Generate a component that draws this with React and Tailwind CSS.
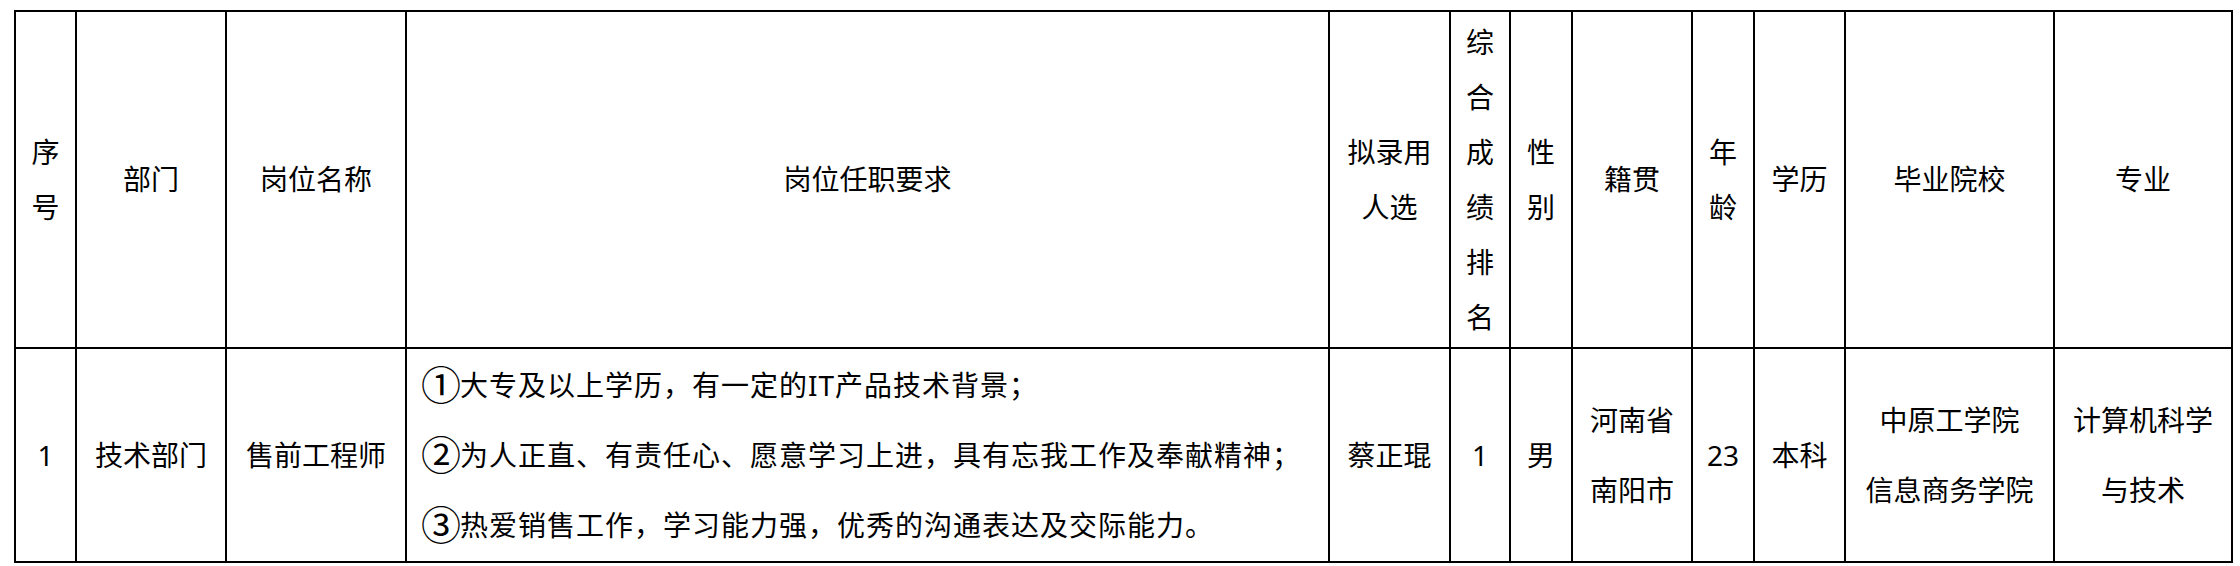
import React from 'react';

// Largeurs des colonnes (px), mesurées sur le tableau
const COLS = [61, 150, 180, 923, 121, 60, 62, 120, 62, 91, 209, 178];

const HEADERS = [
  ['序', '号'],
  ['部门'],
  ['岗位名称'],
  ['岗位任职要求'],
  ['拟录用', '人选'],
  ['综', '合', '成', '绩', '排', '名'],
  ['性', '别'],
  ['籍贯'],
  ['年', '龄'],
  ['学历'],
  ['毕业院校'],
  ['专业'],
];

const REQUIREMENTS = [
  ['①', '大专及以上学历，有一定的IT产品技术背景；'],
  ['②', '为人正直、有责任心、愿意学习上进，具有忘我工作及奉献精神；'],
  ['③', '热爱销售工作，学习能力强，优秀的沟通表达及交际能力。'],
];

const ROW = [
  ['1'],
  ['技术部门'],
  ['售前工程师'],
  null,
  ['蔡正琨'],
  ['1'],
  ['男'],
  ['河南省', '南阳市'],
  ['23'],
  ['本科'],
  ['中原工学院', '信息商务学院'],
  ['计算机科学', '与技术'],
];

export default function App() {
  return (
    <div
      className="w-[2240px] h-[566px] bg-white pt-[10px] pl-[14px] text-black"
      style={{ fontFamily: '"Noto Sans", "Noto Sans CJK SC", sans-serif' }}
    >
      <table className="table-fixed border-collapse border-2 border-black w-[2219px]">
        <colgroup>
          {COLS.map((w, i) => (
            <col key={i} style={{ width: w }} />
          ))}
        </colgroup>
        <tbody>
          <tr className="h-[337px]">
            {HEADERS.map((lines, i) => (
              <td key={i} className="border-2 border-black p-0 text-center align-middle text-[28px] leading-[55px]">
                {lines.map((l, j) => (
                  <div key={j} className="whitespace-nowrap">{l}</div>
                ))}
              </td>
            ))}
          </tr>
          <tr className="h-[214px]">
            {ROW.map((lines, i) =>
              lines ? (
                <td key={i} className="border-2 border-black p-0 text-center align-middle text-[28px] leading-[70px]">
                  {lines.map((l, j) => (
                    <div key={j} className="whitespace-nowrap">{l}</div>
                  ))}
                </td>
              ) : (
                <td key={i} className="border-2 border-black pl-[14px] pr-0 py-0 text-left align-middle text-[28px] leading-[70px]">
                  {REQUIREMENTS.map(([n, l], j) => (
                    <div key={j} className="whitespace-nowrap flex items-center h-[70px] tracking-[1px]">
                      <span className="text-[40px] leading-none mr-[-2px]">{n}</span>
                      <span>{l}</span>
                    </div>
                  ))}
                </td>
              )
            )}
          </tr>
        </tbody>
      </table>
    </div>
  );
}
